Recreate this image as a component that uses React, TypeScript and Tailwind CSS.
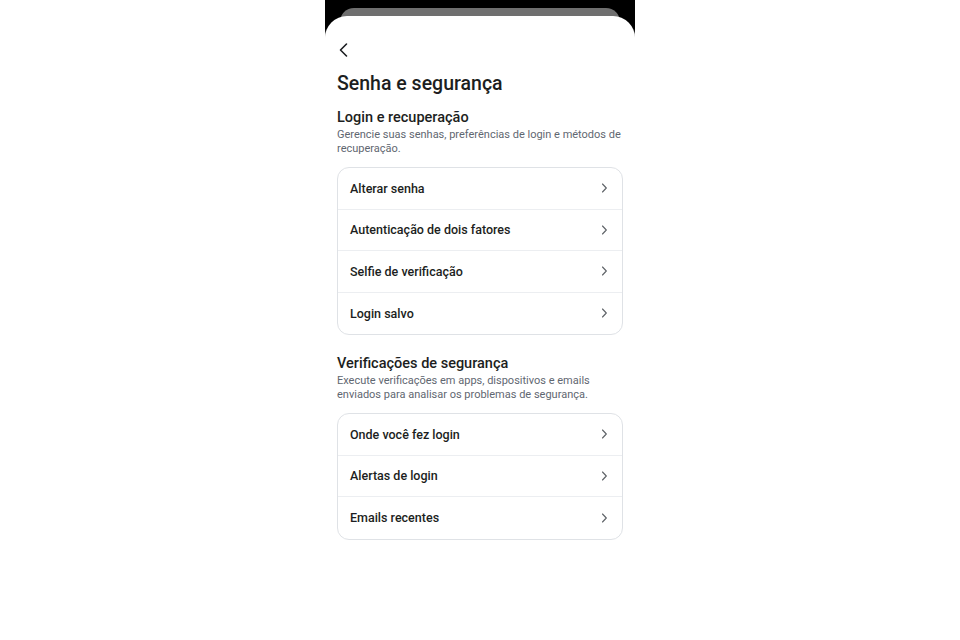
import React from "react";

const Chevron = () => (
  <svg width="10" height="12" viewBox="0 0 10 12" fill="none" className="shrink-0">
    <path d="M3.5 2 L7.3 6 L3.5 10" stroke="#5f6368" strokeWidth="1.15" strokeLinecap="round" strokeLinejoin="round" />
  </svg>
);

const Row = ({ label, last }: { label: string; last?: boolean }) => (
  <div className={`flex h-[41.5px] items-center justify-between pl-[12px] pr-[13px] ${last ? "" : "border-b border-[#eceef1]"}`}>
    <span className="pt-[2px] text-[12.5px] font-medium text-[#1c1e21]">{label}</span>
    <Chevron />
  </div>
);

const Section = ({ title, desc, items }: { title: string; desc: string; items: string[] }) => (
  <div className="flex flex-col">
    <div className="text-[14.5px] font-medium leading-[18px] text-[#1c1e21]">{title}</div>
    <div className="mt-[1px] text-[11px] leading-[14px] text-[#5f6771]">{desc}</div>
    <div className="mt-[11px] overflow-hidden rounded-[12px] border border-[#dfe2e6] bg-white">
      {items.map((it, i) => (
        <Row key={it} label={it} last={i === items.length - 1} />
      ))}
    </div>
  </div>
);

export default function App() {
  return (
    <div className="flex h-[640px] w-[960px] justify-center bg-white" style={{ fontFamily: "Roboto, 'Noto Sans', sans-serif" }}>
      <div className="relative flex w-[310px] flex-col">
        <div className="absolute left-0 right-0 top-0 h-[40px] bg-gradient-to-b from-black from-70% to-white" />
        <div className="absolute left-[15px] right-[15px] top-[8px] h-[20px] rounded-t-[14px] bg-[#6f6f6f]" />
        <div className="relative mt-[16px] flex flex-1 flex-col rounded-t-[22px] bg-white px-[12px]">
          <div className="mt-[26px] h-[20px]">
            <svg width="14" height="16" viewBox="0 0 14 16" fill="none">
              <path d="M9.5 2 L3.5 8 L9.5 14" stroke="#1c1e21" strokeWidth="1.6" strokeLinecap="round" strokeLinejoin="round" />
            </svg>
          </div>
          <div className="mt-[10px] text-[19.5px] font-medium leading-[24px] text-[#1c1e21]">Senha e segurança</div>
          <div className="mt-[13px]">
            <Section
              title="Login e recuperação"
              desc="Gerencie suas senhas, preferências de login e métodos de recuperação."
              items={["Alterar senha", "Autenticação de dois fatores", "Selfie de verificação", "Login salvo"]}
            />
          </div>
          <div className="mt-[20px]">
            <Section
              title="Verificações de segurança"
              desc="Execute verificações em apps, dispositivos e emails enviados para analisar os problemas de segurança."
              items={["Onde você fez login", "Alertas de login", "Emails recentes"]}
            />
          </div>
        </div>
      </div>
    </div>
  );
}
